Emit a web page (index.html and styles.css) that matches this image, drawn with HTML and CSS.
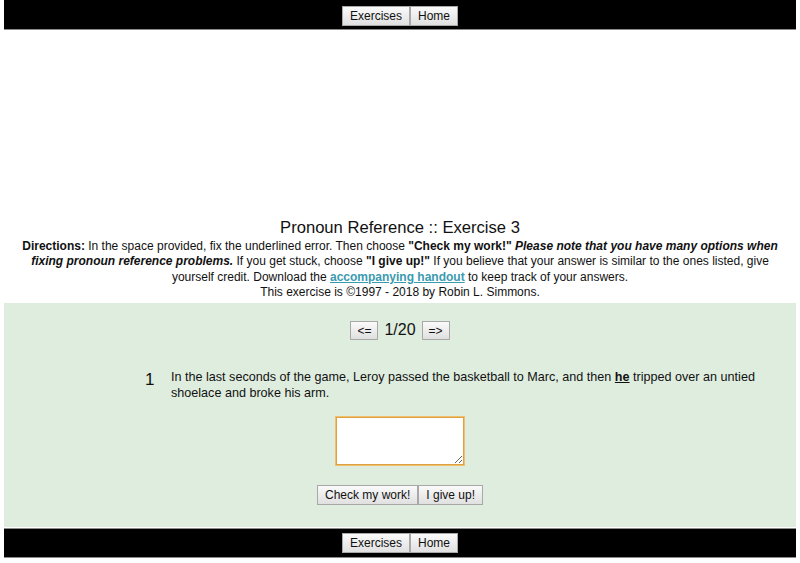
FILE: index.html
```
<!DOCTYPE html>
<html>
<head>
<meta charset="utf-8">
<link rel="stylesheet" href="styles.css">
</head>
<body>
<div class="page">
  <div class="bar top">
    <button class="btn">Exercises</button><button class="btn">Home</button>
  </div>
  <div class="adspace"></div>
  <h1 class="title">Pronoun Reference :: Exercise 3</h1>
  <p class="directions"><b>Directions:</b> In the space provided, fix the underlined error. Then choose <b>"Check my work!"</b> <b><i>Please note that you have many options when fixing pronoun reference problems.</i></b> If you get stuck, choose <b>"I give up!"</b> If you believe that your answer is similar to the ones listed, give yourself credit. Download the <a class="link" href="#">accompanying handout</a> to keep track of your answers.<br>This exercise is ©1997 - 2018 by Robin L. Simmons.</p>
  <div class="exercise">
    <div class="nav">
      <button class="btn">&lt;=</button><span class="count">1/20</span><button class="btn">=&gt;</button>
    </div>
    <div class="question">
      <div class="qnum">1</div>
      <div class="qtext">In the last seconds of the game, Leroy passed the basketball to Marc, and then <b><u>he</u></b> tripped over an untied shoelace and broke his arm.</div>
    </div>
    <div class="answer">
      <textarea class="box"></textarea>
    </div>
    <div class="actions">
      <button class="btn">Check my work!</button><button class="btn">I give up!</button>
    </div>
  </div>
  <div class="bar bottom">
    <button class="btn">Exercises</button><button class="btn">Home</button>
  </div>
</div>
</body>
</html>
```
FILE: styles.css
```
html, body {
  margin: 0;
  padding: 0;
  background: #fff;
}
.page {
  margin: 0 4px;
  font-family: "Liberation Sans", Arial, sans-serif;
  color: #111;
}
.bar {
  background: #000;
  display: flex;
  justify-content: center;
  align-items: center;
  border-bottom: 1px solid #8a8a8a;
}
.bar.top {
  padding-top: 2px;
  box-sizing: border-box;
  height: 30px;
}
.bar.bottom {
  height: 28px;
  margin-top: 1px;
  border-top: 1px solid #8a8a8a;
}
.btn {
  font-family: "Liberation Sans", Arial, sans-serif;
  font-size: 12px;
  color: #111;
  height: 20px;
  padding: 0 7px;
  margin: 0;
  border: 1px solid #a8a8a8;
  border-radius: 0;
  background: linear-gradient(#fafafa, #e0e0e0);
  line-height: 18px;
}
.adspace {
  height: 188px;
}
.title {
  font-size: 16.6px;
  font-weight: normal;
  text-align: center;
  margin: 0;
  line-height: 20px;
}
.directions {
  font-size: 12px;
  line-height: 15.4px;
  text-align: center;
  margin: 1px 16px 0;
  padding-bottom: 2px;
}
.link {
  color: #3a9ab0;
  font-weight: bold;
  text-decoration: underline;
}
.exercise {
  background: #dfeddf;
  padding: 18px 0 22px;
}
.nav {
  display: flex;
  justify-content: center;
  align-items: center;
}
.nav .btn {
  padding: 0 6px;
  height: 19px;
}
.count {
  font-size: 16px;
  margin: 0 6px 0 6px;
}
.question {
  display: flex;
  margin: 28px 20px 0 141px;
}
.qnum {
  font-size: 17px;
  width: 26px;
  flex: none;
  line-height: 20px;
  margin-top: 2px;
}
.qtext {
  font-size: 12.6px;
  line-height: 16px;
  padding-top: 1px;
}
.answer {
  display: flex;
  justify-content: center;
  margin-top: 16px;
}
.box {
  width: 124px;
  height: 44px;
  border: 1px solid #e0a040;
  outline: 1px solid #eec070;
  box-sizing: content-box;
  padding: 1px;
  resize: both;
  margin: 0;
  display: block;
}
.actions {
  display: flex;
  justify-content: center;
  margin-top: 20px;
}
```
